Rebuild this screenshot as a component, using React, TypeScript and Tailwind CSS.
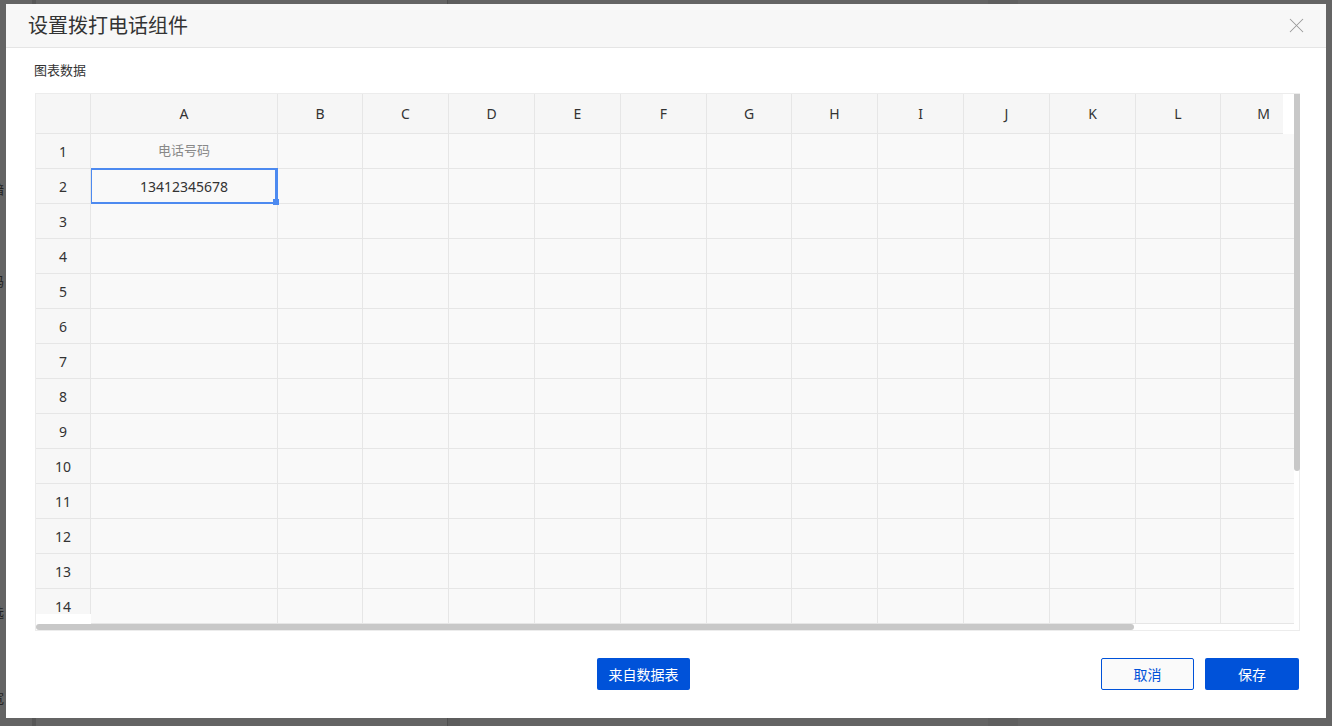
import { X } from "lucide-react";

const COLS = [
  { key: "A", w: 187 },
  { key: "B", w: 85 },
  { key: "C", w: 86 },
  { key: "D", w: 86 },
  { key: "E", w: 86 },
  { key: "F", w: 86 },
  { key: "G", w: 85 },
  { key: "H", w: 86 },
  { key: "I", w: 86 },
  { key: "J", w: 86 },
  { key: "K", w: 86 },
  { key: "L", w: 85 },
  { key: "M", w: 86 },
  { key: "N", w: 86 },
];

const ROWS = Array.from({ length: 15 }, (_, i) => i + 1);

const cellText = (row: number, col: string) => {
  if (col !== "A") return "";
  if (row === 1) return "电话号码";
  if (row === 2) return "13412345678";
  return "";
};

// page behind the overlay, only the edges show
const Backdrop = () => (
  <div className="absolute inset-0 flex bg-[#646464]">
    <div className="w-[32px]" />
    <div className="w-[4px] bg-[#575757]" />
    <div className="w-[411px]" />
    <div className="w-[1px] bg-[#4f4f4f]" />
    <div className="w-[12px] bg-[#5c5c5c]" />
    <div className="w-[528px]" />
    <div className="w-[30px] bg-[#5f5f5f]" />
    <div className="flex-1" />
    <div className="absolute left-[-9px] top-0 flex h-full flex-col text-[13px] text-[#222]">
      <span className="mt-[180px]">暗</span>
      <span className="mt-[72px]">码</span>
      <span className="mt-[312px]">选</span>
      <span className="mt-[66px]">宽</span>
    </div>
  </div>
);

const HeaderRow = () => (
  <div className="flex h-[40px] w-[1247px] shrink-0 overflow-hidden bg-[#f6f6f6]">
    <div className="h-full w-[55px] shrink-0 border-r border-b border-[#e6e6e6]" />
    {COLS.map((c) => (
      <div
        key={c.key}
        style={{ width: c.w }}
        className="flex h-full shrink-0 items-center justify-center border-r border-b border-[#e6e6e6] text-[14px] text-[#333]"
      >
        {c.key}
      </div>
    ))}
  </div>
);

const RowNumbers = () => (
  <div className="flex h-[480px] w-[55px] shrink-0 flex-col overflow-hidden bg-[#f7f7f7]">
    {ROWS.map((r) => (
      <div
        key={r}
        className="flex h-[35px] shrink-0 items-center justify-center border-r border-b border-[#e6e6e6] text-[14px] text-[#333]"
      >
        {r}
      </div>
    ))}
  </div>
);

const DataCells = () => (
  <div className="flex h-[490px] w-[1203px] shrink-0 flex-col overflow-hidden bg-[#f9f9f9]">
    {ROWS.map((r) => (
      <div key={r} className="flex h-[35px] shrink-0">
        {COLS.map((c) => {
          const selected = r === 2 && c.key === "A";
          const text = cellText(r, c.key);
          return (
            <div
              key={c.key}
              style={{ width: c.w }}
              className={`relative flex h-full shrink-0 items-center justify-center border-r border-b border-[#e6e6e6] text-[13px] ${
                r === 1 ? "text-[#888]" : "text-[#333]"
              } ${selected ? "z-10" : ""}`}
            >
              {selected && (
                <div className="absolute top-[-1px] left-[-1px] right-[-1px] bottom-[-1px] border-2 border-r-[3px] border-[#4d8af0]">
                  <div className="absolute right-[-4px] bottom-[-3px] h-[6px] w-[6px] bg-[#4d8af0]" />
                </div>
              )}
              <span className={selected ? "text-[14px]" : ""}>{text}</span>
            </div>
          );
        })}
      </div>
    ))}
  </div>
);

const Sheet = () => (
  <div className="flex h-[538px] w-[1265px] flex-col border border-[#ececec] bg-white">
    <div className="flex h-[530px]">
      <div className="flex w-[1258px] flex-col">
        <HeaderRow />
        <div className="flex">
          <RowNumbers />
          <DataCells />
        </div>
      </div>
      <div className="w-[6px]">
        <div className="h-[377px] w-[6px] rounded-b-[3px] bg-[#c8c8c8]" />
      </div>
    </div>
    <div className="h-[6px]">
      <div className="h-[6px] w-[1098px] rounded-[3px] bg-[#c8c8c8]" />
    </div>
  </div>
);

export default function App() {
  return (
    <div
      className="relative h-[726px] w-[1332px] overflow-hidden"
      style={{ fontFamily: '"Noto Sans", "Noto Sans CJK SC", sans-serif' }}
    >
      <Backdrop />
      <div className="absolute left-[6px] top-[4px] flex h-[714px] w-[1320px] flex-col bg-white">
        <div className="flex h-[44px] shrink-0 items-center justify-between border-b border-[#e5e5e5] bg-[#f7f7f7] pl-[22px] pr-[17px]">
          <span className="text-[20px] text-[#333]">设置拨打电话组件</span>
          <X size={25} strokeWidth={1} className="text-[#999]" />
        </div>
        <div className="flex flex-col pl-[28px] pt-[12px]">
          <div className="h-[20px] text-[13px] leading-[20px] text-[#333]">图表数据</div>
          <div className="mt-[13px] pl-[1px]">
            <Sheet />
          </div>
          <div className="mt-[27px] flex h-[32px] items-center pl-[563px] pr-[27px]">
            <button className="h-[32px] w-[93px] rounded-[2px] bg-[#0052d9] text-[14px] text-white">
              来自数据表
            </button>
            <div className="flex-1" />
            <button className="h-[32px] w-[93px] rounded-[2px] border border-[#0052d9] bg-[#fafafa] text-[14px] text-[#0052d9]">
              取消
            </button>
            <button className="ml-[11px] h-[32px] w-[94px] rounded-[2px] bg-[#0052d9] text-[14px] text-white">
              保存
            </button>
          </div>
        </div>
      </div>
    </div>
  );
}
